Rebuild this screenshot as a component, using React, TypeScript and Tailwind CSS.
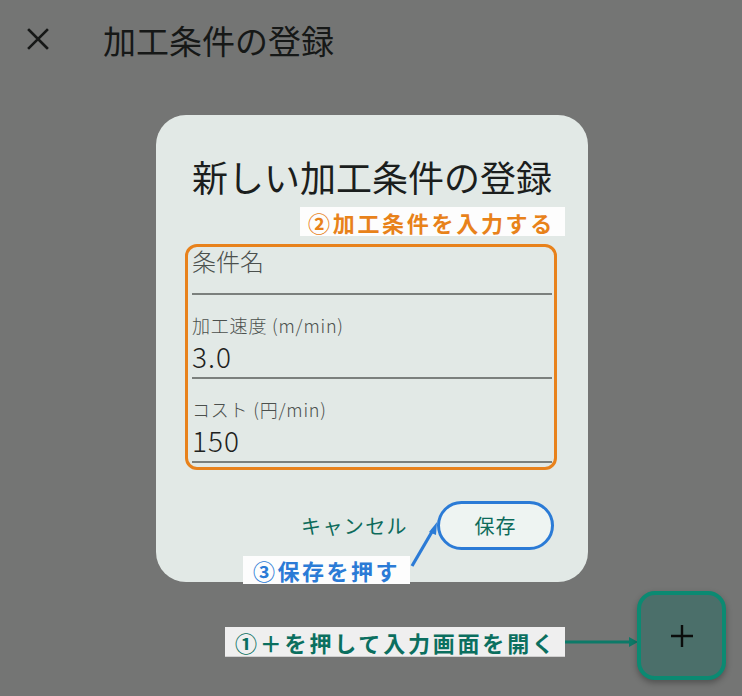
import React from "react";

const jp = { fontFamily: '"Noto Sans CJK JP", "Noto Sans", sans-serif' };

function Field({ label, value }: { label: string; value: string }) {
  return (
    <div className="flex flex-col pt-[19px] pb-[5px] border-b-2 border-[#7b807d]">
      <div className="text-[18px] leading-[22px] tracking-[0.8px] font-light text-[#4b504d] whitespace-pre">{label}</div>
      <div className="mt-[4px] text-[28px] leading-[32px] tracking-[1px] font-light text-[#1e2220]">{value}</div>
    </div>
  );
}

export default function App() {
  return (
    <div style={jp} className="relative w-[742px] h-[696px] overflow-hidden bg-[#747574]">
      {/* header */}
      <div className="flex items-start h-[84px]">
        <svg className="ml-[26px] mt-[26.5px]" width="24" height="24" viewBox="0 0 24 24">
          <path d="M3 3 L21 21 M21 3 L3 21" stroke="#161817" strokeWidth="2.6" strokeLinecap="square" fill="none" />
        </svg>
        <div className="ml-[53px] mt-[20px] text-[33px] leading-[40px] text-[#161817]">加工条件の登録</div>
      </div>

      {/* dialog */}
      <div className="relative mt-[31px] ml-[156px] w-[432px] h-[467px] rounded-[30px] bg-[#e2e9e6] flex flex-col">
        <div className="pt-[39px] text-center text-[36px] leading-[44px] text-[#1b1e1d]">新しい加工条件の登録</div>

        <div className="mt-[46px] ml-[29px] w-[372px] border-[3px] border-[#e8821c] rounded-[12px] pl-[4px] pr-[2px] pb-[4px]">
          <div className="h-[48px] border-b-2 border-[#7b807d]">
            <div className="text-[24px] leading-[28px] font-light text-[#4b504d]">条件名</div>
          </div>
          <Field label="加工速度 (m/min)" value="3.0" />
          <Field label="コスト (円/min)" value="150" />
        </div>

        <div className="mt-[31px] flex items-center justify-end pr-[34px] gap-[29px]">
          <div className="text-[20px] leading-[26px] tracking-[1.4px] text-[#0d6b5b]">キャンセル</div>
          <div className="w-[117px] h-[49px] rounded-full border-[3px] border-[#2b7bd6] bg-[#eef4f2] flex items-center justify-center text-[20px] leading-[26px] tracking-[1px] text-[#0d6b5b]">
            保存
          </div>
        </div>

        {/* annotation 2 */}
        <div className="absolute left-[144px] top-[92px] w-[265px] h-[29px] bg-[#fdfdfd] pl-[8px] flex items-center text-[22px] leading-[28px] tracking-[2.7px] font-bold text-[#e8821a] whitespace-nowrap">
          ②加工条件を入力する
        </div>
      </div>

      {/* arrows */}
      <svg className="absolute left-0 top-0 pointer-events-none" width="742" height="696" viewBox="0 0 742 696">
        <line x1="412" y1="566" x2="433" y2="530" stroke="#2b7bd6" strokeWidth="3.2" />
        <polygon points="437,522 429,532 436,535" fill="#2b7bd6" />
        <line x1="565" y1="642" x2="630" y2="642" stroke="#0d7a68" strokeWidth="3" />
        <polygon points="638,642 629,637 629,647" fill="#0d7a68" />
      </svg>

      {/* annotation 3 */}
      <div className="absolute left-[243px] top-[556px] w-[167px] h-[28px] bg-[#fdfdfd] pl-[10px] flex items-center text-[22px] leading-[28px] tracking-[2.5px] font-bold text-[#2b7bd6] whitespace-nowrap">
        ③保存を押す
      </div>

      {/* annotation 1 */}
      <div className="absolute left-[225px] top-[627px] w-[340px] h-[30px] bg-[#efefef] border-b border-[#cfcfcf] pl-[10px] flex items-center text-[22px] leading-[28px] tracking-[2.8px] font-bold text-[#0b6f5f] whitespace-nowrap">
        ①＋を押して入力画面を開く
      </div>

      {/* FAB */}
      <div className="absolute left-[637px] top-[591px] w-[89px] h-[89px] rounded-[18px] border-[4px] border-[#0b8a72] bg-[#4b6f6a] shadow-[0_3px_6px_rgba(0,0,0,0.3)] flex items-center justify-center">
        <svg width="22" height="22" viewBox="0 0 22 22">
          <path d="M11 0 V22 M0 11 H22" stroke="#0b0d0c" strokeWidth="2.4" fill="none" />
        </svg>
      </div>
    </div>
  );
}
